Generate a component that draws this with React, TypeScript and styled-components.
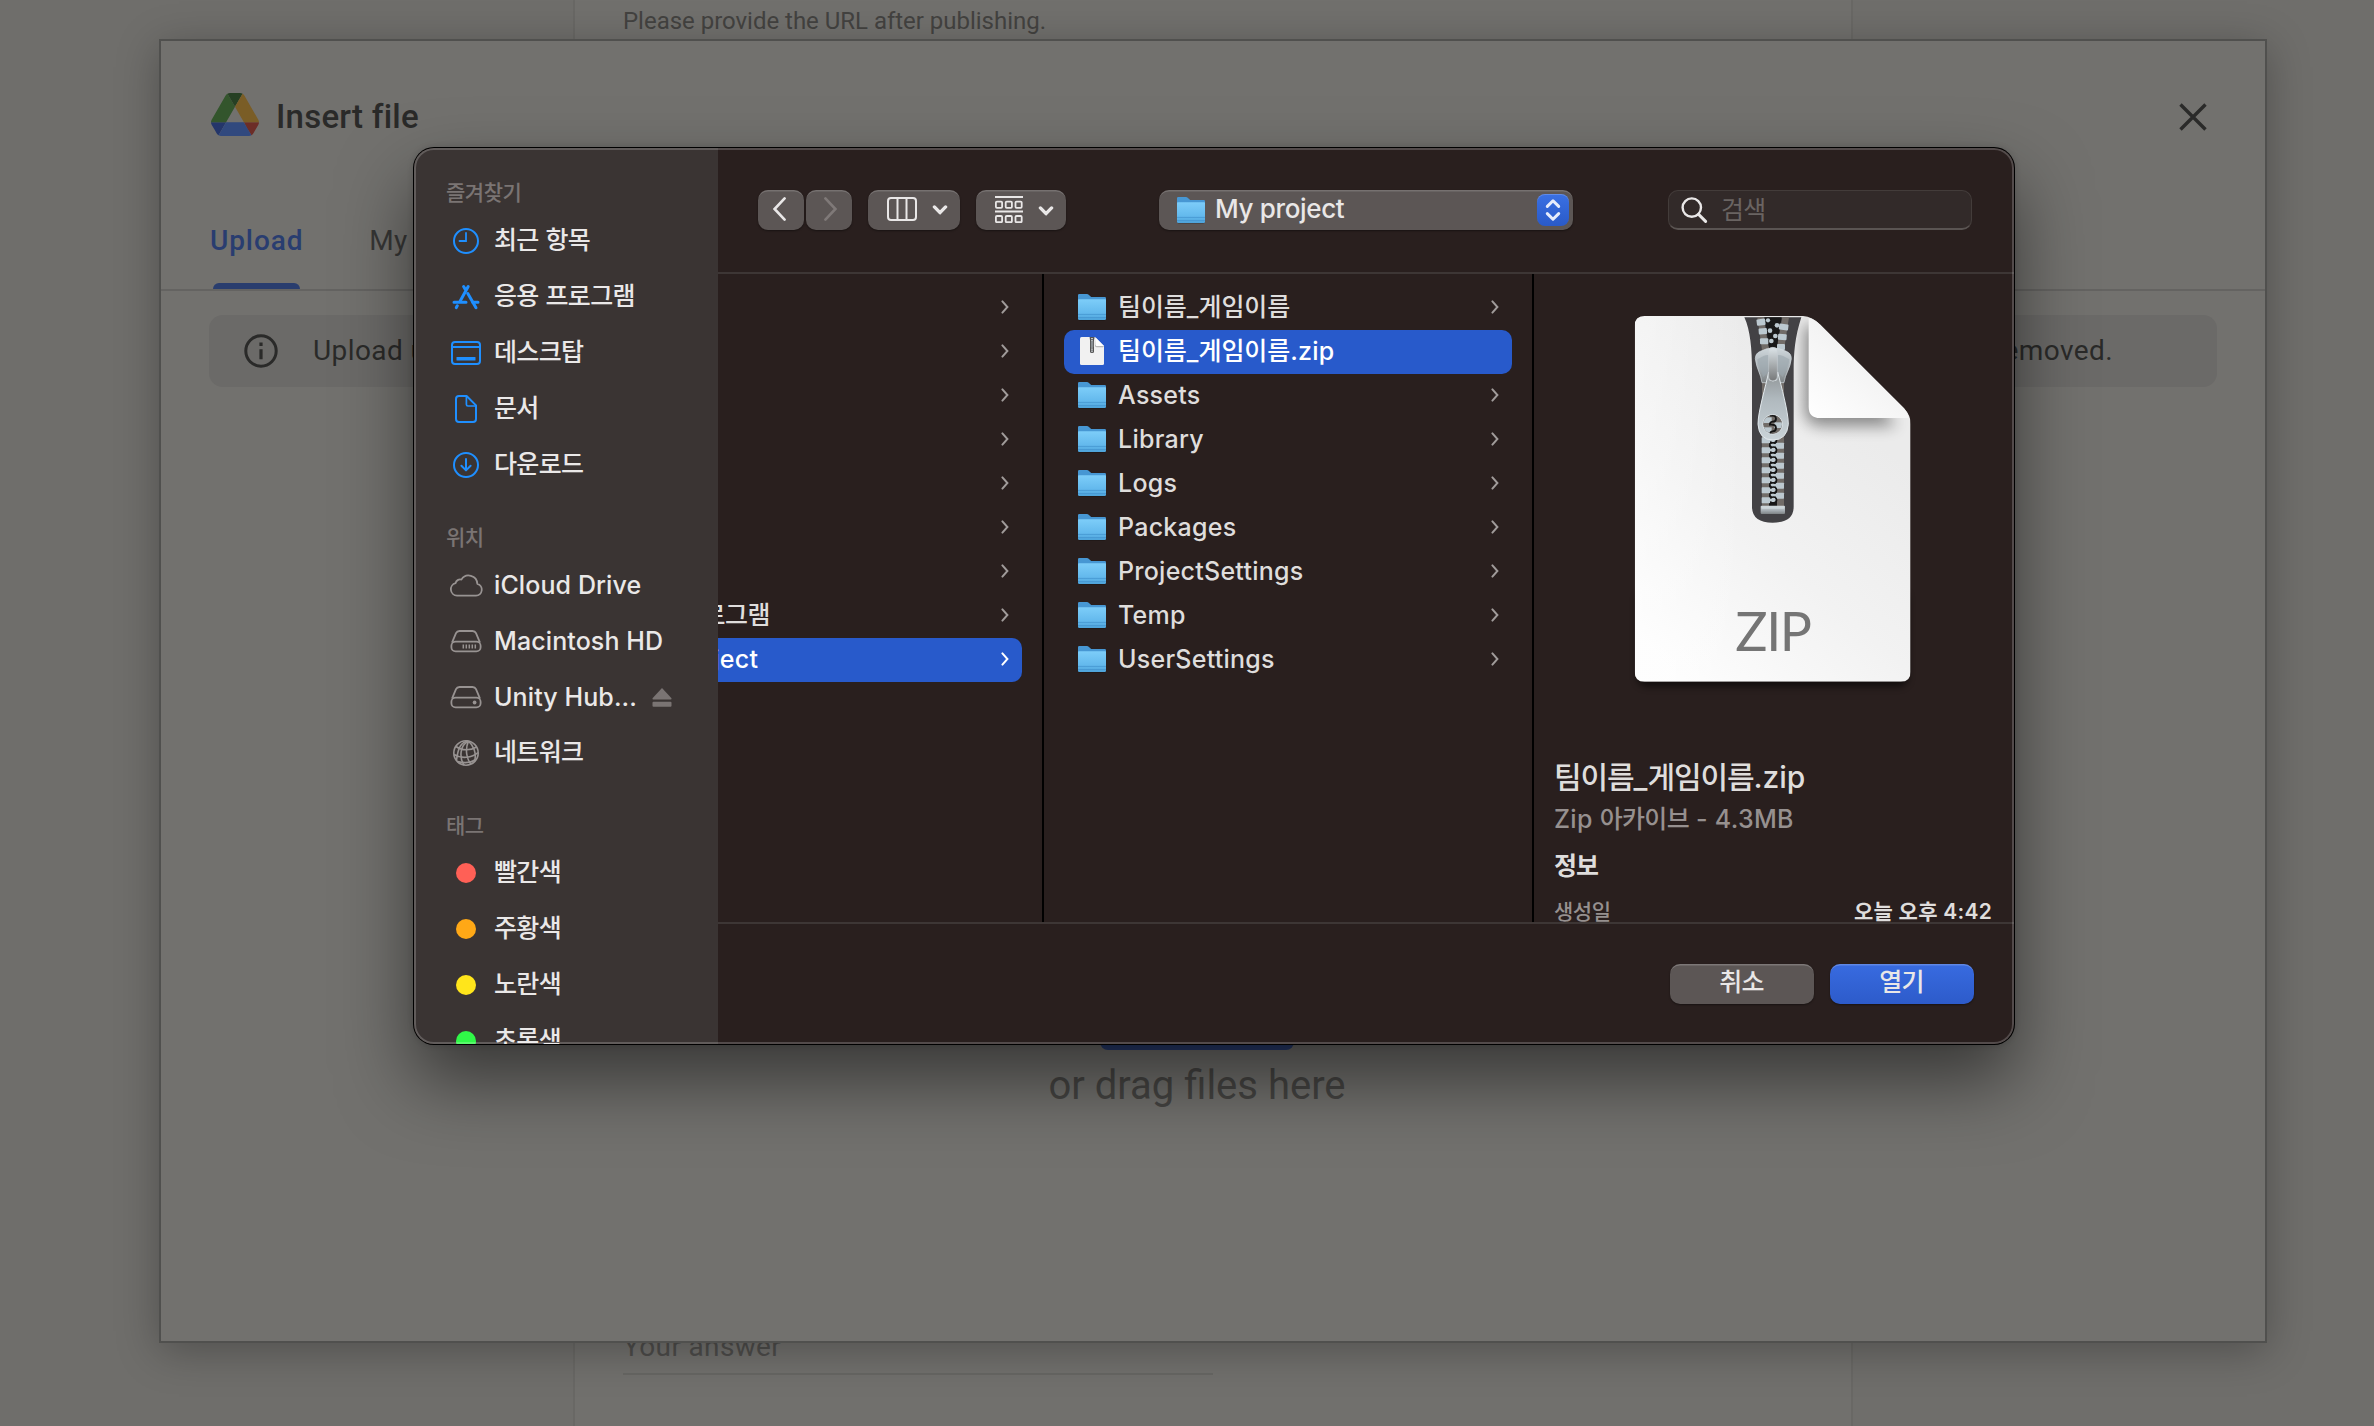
import React from "react";
import styled, { createGlobalStyle } from "styled-components";

const GlobalStyle = createGlobalStyle`
  * { box-sizing: border-box; }
  body { margin: 0; background: #6f6e6b; }
`;

const web = `Roboto, "Noto Sans CJK KR", sans-serif`;
const mac = `Inter, "Noto Sans CJK KR", sans-serif`;

/* ---------- Form page behind the dialogs ---------- */

const Screen = styled.div`
  position: relative;
  width: 2374px;
  height: 1426px;
  overflow: hidden;
  background: #6f6e6b;
  font-family: ${web};
`;

const FormCard = styled.div`
  display: flex;
  flex-direction: column;
  justify-content: space-between;
  width: 1280px;
  height: 1426px;
  margin-left: 573px;
  padding: 0 48px 51px;
  border: solid #696865;
  border-width: 0 2px;
  background: #71706d;
`;

const FormHint = styled.div`
  padding-top: 6px;
  font-size: 24px;
  line-height: 30px;
  letter-spacing: -0.02px;
  color: #434240;
`;

const AnswerField = styled.div`
  width: 590px;
  height: 45px;
  border-bottom: 2px solid #676663;
  font-size: 28px;
  line-height: 34px;
  letter-spacing: 0.35px;
  color: #4d4c4a;
`;

/* ---------- Insert file dialog ---------- */

const PickerDialog = styled.section`
  position: absolute;
  left: 159px;
  top: 39px;
  width: 2108px;
  height: 1304px;
  display: flex;
  flex-direction: column;
  border: 2px solid #50504e;
  background: #72716e;
  box-shadow: 0 8px 40px rgba(0, 0, 0, 0.28);
`;

const PickerHeader = styled.header`
  display: flex;
  align-items: center;
  height: 151px;
  padding: 0 58px 0 50px;
`;

const PickerTitle = styled.h1`
  flex: 1;
  margin: 0 0 0 17px;
  font-size: 33px;
  font-weight: 500;
  line-height: 40px;
  letter-spacing: 0.25px;
  color: #2a2a29;
`;

const Tabs = styled.nav`
  display: flex;
  gap: 66px;
  height: 99px;
  padding-left: 49px;
  border-bottom: 2px solid #646361;
`;

const Tab = styled.div<{ $active?: boolean }>`
  display: flex;
  flex-direction: column;
  align-items: center;
  justify-content: space-between;
  padding-top: 32px;
  font-size: 28px;
  font-weight: ${(p) => (p.$active ? 500 : 400)};
  line-height: 34px;
  letter-spacing: ${(p) => (p.$active ? 0.9 : 0.3)}px;
  white-space: nowrap;
  color: ${(p) => (p.$active ? "#293d70" : "#363635")};
`;

const TabIndicator = styled.span`
  width: 87px;
  height: 6px;
  border-radius: 6px 6px 0 0;
  background: #293d6e;
`;

const Notice = styled.div`
  display: flex;
  align-items: center;
  height: 72px;
  margin: 24px 48px 0;
  padding: 0 104px 0 35px;
  border-radius: 14px;
  background: #6b6a68;
  font-size: 28px;
  letter-spacing: 0.4px;
  color: #2a2a29;
`;

const NoticeStart = styled.span`
  flex: 1;
  margin: -2px 0 0 35px;
`;

const NoticeEnd = styled.span`
  margin-top: -2px;
`;

const DropZone = styled.div`
  display: flex;
  flex-direction: column;
  align-items: center;
  margin-top: 591px;
  padding-right: 32px;
`;

const BrowseButton = styled.div`
  width: 194px;
  height: 72px;
  border-radius: 8px;
  background: #2a3f74;
`;

const DropHint = styled.div`
  margin-top: 12px;
  font-size: 40px;
  line-height: 48px;
  color: #464543;
`;

/* ---------- System open panel ---------- */

const OpenPanel = styled.section`
  position: absolute;
  left: 414px;
  top: 148px;
  width: 1600px;
  height: 896px;
  display: flex;
  overflow: hidden;
  border-radius: 20px;
  background: #291f1e;
  font-family: ${mac};
  color: #dfdddc;
  &::after {
    content: "";
    position: absolute;
    inset: 0;
    border: 2px solid rgba(255, 255, 255, 0.2);
    border-radius: 20px;
  }
`;

const PanelShadow = styled.div`
  position: absolute;
  left: 413px;
  top: 147px;
  width: 1602px;
  height: 898px;
  border-radius: 21px;
  background: #000;
  box-shadow: 0 36px 72px rgba(0, 0, 0, 0.5), 0 0 6px rgba(0, 0, 0, 0.15);
`;

const Sidebar = styled.aside`
  flex: none;
  width: 304px;
  background: #3a3433;
`;

const SideHeading = styled.h2<{ $h: number }>`
  height: ${(p) => p.$h}px;
  margin: 0;
  padding: 31px 0 0 32px;
  font-size: 21px;
  font-weight: 500;
  line-height: 28px;
  letter-spacing: -0.5px;
  color: #7a7473;
`;

const SideItem = styled.div`
  display: flex;
  align-items: center;
  height: 56px;
  padding-left: 34px;
  font-size: 25px;
  font-weight: 500;
  color: #eae8e8;
`;

const SideIcon = styled.span`
  display: flex;
  justify-content: center;
  width: 36px;
  margin-right: 10px;
`;

const SideLabel = styled.span<{ $up?: number }>`
  line-height: 36px;
  letter-spacing: 0.1px;
  white-space: nowrap;
  margin-top: ${(p) => -(p.$up ?? 0)}px;
`;

const TagDot = styled.span<{ $color: string }>`
  width: 20px;
  height: 20px;
  border-radius: 50%;
  background: ${(p) => p.$color};
`;

const Eject = styled.svg`
  margin-left: 15px;
`;

const Main = styled.div`
  flex: 1;
  display: flex;
  flex-direction: column;
  min-width: 0;
`;

const Toolbar = styled.div`
  display: flex;
  align-items: center;
  height: 126px;
  padding: 0 42px 0 40px;
  border-bottom: 2px solid #3d3635;
`;

const ToolButton = styled.div<{ $w: number; $ml?: number; $pad?: string }>`
  display: flex;
  align-items: center;
  justify-content: space-between;
  width: ${(p) => p.$w}px;
  height: 40px;
  margin-left: ${(p) => p.$ml ?? 0}px;
  padding: ${(p) => p.$pad ?? "0"};
  border-radius: 10px;
  background: #5c5655;
  box-shadow: inset 0 2px 0 -0.5px rgba(255, 255, 255, 0.16), 0 1px 2px rgba(0, 0, 0, 0.4);
`;

const LocationName = styled.span`
  flex: 1;
  margin: -2px 0 0 10px;
  font-size: 26px;
  font-weight: 500;
  line-height: 36px;
  letter-spacing: -0.35px;
  color: #e9e7e7;
`;

const Stepper = styled.span`
  display: flex;
  align-items: center;
  justify-content: center;
  width: 32px;
  height: 32px;
  border-radius: 8px;
  background: linear-gradient(#3a70e3, #2a5ac8);
  box-shadow: inset 0 1px 0 rgba(255, 255, 255, 0.2);
`;

const SearchField = styled.div`
  display: flex;
  align-items: center;
  width: 304px;
  height: 40px;
  margin-left: 95px;
  padding-left: 12px;
  border: 1px solid #433c3a;
  border-bottom: 2px solid #5a5452;
  border-radius: 10px;
  background: #322a29;
  font-size: 25px;
  letter-spacing: -0.7px;
  color: #6a6462;
`;

const SearchHint = styled.span`
  margin: -4px 0 0 13px;
`;

const Browser = styled.div`
  display: flex;
  height: 648px;
  overflow: hidden;
`;

const Column = styled.div<{ $w: number }>`
  flex: none;
  width: ${(p) => p.$w}px;
  padding: 12px 20px 0;
  overflow: hidden;
  border-right: 2px solid #000;
`;

const ParentColumn = styled(Column)`
  padding-left: 0;
  display: flex;
  flex-direction: column;
  align-items: flex-end;
`;

const Row = styled.div<{ $selected?: boolean }>`
  display: flex;
  flex: none;
  align-items: center;
  width: 448px;
  height: 44px;
  padding: 0 13px 2px 14px;
  border-radius: 10px;
  background: ${(p) => (p.$selected ? "#285acb" : "transparent")};
  color: ${(p) => (p.$selected ? "#fff" : "#dfdddc")};
`;

const RowName = styled.span`
  flex: 1;
  margin-left: 12px;
  font-size: 25px;
  font-weight: 500;
  line-height: 36px;
  letter-spacing: 0.25px;
  white-space: nowrap;
`;

const Hangul = styled.span<{ $ls: number }>`
  letter-spacing: ${(p) => p.$ls}px;
`;

const Preview = styled.div`
  flex: 1;
  padding: 36px 22px 0 20px;
`;

const ZipArt = styled.svg`
  display: block;
  margin-left: 69px;
`;

const FileName = styled.div`
  margin-top: 58px;
  font-size: 30px;
  font-weight: 500;
  line-height: 44px;
  white-space: nowrap;
`;

const FileKind = styled.div`
  margin-top: 1px;
  font-size: 25px;
  font-weight: 500;
  line-height: 38px;
  letter-spacing: 0.3px;
  color: #96908f;
`;

const InfoTitle = styled.div`
  margin-top: 8px;
  font-size: 25px;
  font-weight: 700;
  line-height: 40px;
  letter-spacing: -1px;
`;

const InfoRow = styled.div`
  display: flex;
  justify-content: space-between;
  margin-top: 10px;
  font-size: 21px;
  font-weight: 500;
  line-height: 32px;
  letter-spacing: -0.5px;
  white-space: nowrap;
`;

const InfoKey = styled.span`
  color: #96908f;
`;

const InfoValue = styled.span`
  font-weight: 600;
  letter-spacing: 0.25px;
`;

const Footer = styled.div`
  display: flex;
  flex: 1;
  align-items: center;
  justify-content: flex-end;
  gap: 16px;
  padding-right: 40px;
  border-top: 2px solid #3d3635;
`;

const PushButton = styled.div<{ $primary?: boolean }>`
  width: 144px;
  height: 40px;
  padding-right: 1px;
  border-radius: 10px;
  background: ${(p) => (p.$primary ? "linear-gradient(#386be0, #2d5bca)" : "#5c5655")};
  box-shadow: inset 0 2px 0 -0.5px rgba(255, 255, 255, 0.2), 0 1px 2px rgba(0, 0, 0, 0.4);
  font-size: 25px;
  font-weight: 500;
  line-height: 37px;
  letter-spacing: -0.7px;
  text-align: center;
  color: #e9e7e7;
`;

/* ---------- Drawings ---------- */

const LogoSvg = styled.svg`
  margin-top: -4px;
`;

const DriveLogo = () => (
  <LogoSvg width="48" height="43" viewBox="0 0 87.3 78">
    <path fill="#24366a" d="m6.6 66.85 3.85 6.65c.8 1.4 1.95 2.5 3.3 3.3l13.75-23.8h-27.5c0 1.55.4 3.1 1.2 4.5z" />
    <path fill="#33552c" d="m43.65 25-13.75-23.8c-1.35.8-2.5 1.9-3.3 3.3l-25.4 44a9.06 9.06 0 0 0-1.2 4.5h27.5z" />
    <path fill="#6c2d27" d="m73.55 76.8c1.35-.8 2.5-1.9 3.3-3.3l1.6-2.75 7.65-13.25c.8-1.4 1.2-2.95 1.2-4.5h-27.5l5.85 11.5z" />
    <path fill="#264023" d="m43.65 25 13.75-23.8c-1.35-.8-2.9-1.2-4.5-1.2h-18.5c-1.6 0-3.15.45-4.5 1.2z" />
    <path fill="#31497e" d="m59.8 53h-32.3l-13.75 23.8c1.35.8 2.9 1.2 4.5 1.2h50.8c1.6 0 3.15-.45 4.5-1.2z" />
    <path fill="#7a5d26" d="m73.4 26.5-12.7-22c-.8-1.4-1.95-2.5-3.3-3.3l-13.75 23.8 16.15 28h27.45c0-1.55-.4-3.1-1.2-4.5z" />
  </LogoSvg>
);

const CloseIcon = () => (
  <svg width="28" height="28" viewBox="0 0 28 28" stroke="#2a2a29" strokeWidth="3.4">
    <path d="M1.5 1.5 26.5 26.5M26.5 1.5 1.5 26.5" />
  </svg>
);

const InfoIcon = () => (
  <svg width="34" height="34" viewBox="0 0 34 34" fill="none" stroke="#2a2a29" strokeWidth="3">
    <circle cx="17" cy="17" r="15.2" />
    <path d="M17 15.2v10M17 8.6v3.4" strokeWidth="3.2" />
  </svg>
);

const blue = "#1f8fff";
const grey = "#989392";

const ClockIcon = () => (
  <svg width="28" height="28" viewBox="0 0 28 28" fill="none" stroke={blue} strokeWidth="2" strokeLinecap="round">
    <circle cx="14" cy="14" r="12" />
    <path d="M14 6v8H7.5" strokeWidth="1.8" />
  </svg>
);

const AppsIcon = () => (
  <svg width="28" height="26" viewBox="0 0 28 26" fill="none" stroke={blue} strokeWidth="3" strokeLinecap="round">
    <path d="M16.2 2.5 8.2 17M11.6 2.5l1.6 2.8M15.8 9.5l8.2 14.2M5.3 21.8l-1 1.8" />
    <path d="M2 18.3h12M20.8 18.3H26" />
  </svg>
);

const DesktopIcon = () => (
  <svg width="30" height="24" viewBox="0 0 30 24" fill="none" stroke={blue} strokeWidth="2">
    <rect x="1" y="1" width="28" height="22" rx="3" />
    <path d="M1 6h28" />
    <rect x="5.5" y="16" width="19" height="3.6" rx="0.6" fill={blue} stroke="none" />
  </svg>
);

const DocumentIcon = () => (
  <svg width="22" height="28" viewBox="0 0 22 28" fill="none" stroke={blue} strokeWidth="2" strokeLinejoin="round">
    <path d="M4 1h7.6L21 10.4V24a3 3 0 0 1-3 3H4a3 3 0 0 1-3-3V4a3 3 0 0 1 3-3z" />
    <path d="M11.4 1.4v8a1.6 1.6 0 0 0 1.6 1.6h7.6" strokeWidth="1.7" />
  </svg>
);

const DownloadIcon = () => (
  <svg width="28" height="28" viewBox="0 0 28 28" fill="none" stroke={blue} strokeWidth="2" strokeLinecap="round" strokeLinejoin="round">
    <circle cx="14" cy="14" r="12" />
    <path d="M14 8v11M9.4 14.8 14 19.4l4.6-4.6" />
  </svg>
);

const CloudIcon = () => (
  <svg width="34" height="24" viewBox="0 0 34 24" fill="none" stroke={grey} strokeWidth="1.8" strokeLinejoin="round">
    <path d="M8 22.6A6.3 6.3 0 0 1 6.6 10.2A4.6 4.6 0 0 1 12.4 6.6A8.6 8.6 0 0 1 28.3 10.8A6 6 0 0 1 27 22.6z" />
  </svg>
);

const DriveIcon = ({ internal }: { internal?: boolean }) => (
  <svg width="32" height="24" viewBox="0 0 32 24" fill="none" stroke={grey} strokeWidth="1.8">
    <path d="M2 13.6 6 4.2Q7 2 9.5 2h13Q25 2 26 4.2l4 9.4" />
    <rect x="1.4" y="12.6" width="29.2" height="9.8" rx="4.2" />
    {internal ? (
      <path d="M13.3 15.4v4.2M16.3 15.4v4.2M19.3 15.4v4.2M22.3 15.4v4.2M25.3 15.4v4.2" strokeWidth="1.5" />
    ) : (
      <circle cx="24.6" cy="17.5" r="1.9" fill={grey} stroke="none" />
    )}
  </svg>
);

const NetworkIcon = () => (
  <svg width="28" height="28" viewBox="0 0 28 28" fill="none" stroke={grey} strokeWidth="1.6">
    <circle cx="14" cy="14" r="12.2" />
    <path d="M16.5 2.2C8 6 7 18 12 26M16.5 2.2C12 12 16 22 19 25M16.5 2.2C21 6 25 14 22.5 22.5" />
    <path d="M16 2C10 3 6 7 4.5 21.5M4 7.5C10 12 19 11.5 24.6 8M2 15.5C9 20 20 19 26 13.5M5.5 22.5C11 24 18 24.5 23.5 20.5" />
  </svg>
);

const Chevron = ({ color, back, w = 13, h = 24, sw = 2.6 }: { color: string; back?: boolean; w?: number; h?: number; sw?: number }) => (
  <svg width={w} height={h} viewBox={`0 0 ${w} ${h}`} fill="none" stroke={color} strokeWidth={sw} strokeLinecap="round" strokeLinejoin="miter">
    <path d={back ? `M${w - 1.4} 1.4L1.6 ${h / 2}L${w - 1.4} ${h - 1.4}` : `M1.4 1.4L${w - 1.6} ${h / 2}L1.4 ${h - 1.4}`} />
  </svg>
);

const DownCaret = () => (
  <svg width="16" height="12" viewBox="0 0 16 12" fill="none" stroke="#e9e7e7" strokeWidth="3.3" strokeLinecap="round" strokeLinejoin="round">
    <path d="M2.4 3.9 8 9.7 13.6 3.9" />
  </svg>
);

const ColumnsIcon = () => (
  <svg width="30" height="24" viewBox="0 0 30 24" fill="none" stroke="#e9e7e7" strokeWidth="2">
    <rect x="1" y="1" width="28" height="22" rx="3" />
    <path d="M10.5 1v22M19.5 1v22" />
  </svg>
);

const GroupIcon = () => (
  <svg width="28" height="27" viewBox="0 0 28 27" fill="none" stroke="#e9e7e7" strokeWidth="1.8">
    <path d="M0 1h28M0 15.5h28" />
    {[5.6, 20].map((y) => [0.9, 10.7, 20.5].map((x) => <rect key={`${x}-${y}`} x={x} y={y} width="6.2" height="6.2" rx="1" />))}
  </svg>
);

const StepperIcon = () => (
  <svg width="16" height="24" viewBox="0 0 16 24" fill="none" stroke="#e6ecfb" strokeWidth="3" strokeLinecap="round" strokeLinejoin="round">
    <path d="M2.3 8.4 8 2.8l5.7 5.6M2.3 15.6 8 21.2l5.7-5.6" />
  </svg>
);

const SearchIcon = () => (
  <svg width="27" height="26" viewBox="0 0 27 26" fill="none" stroke="#e9e7e7" strokeWidth="2.4" strokeLinecap="round">
    <circle cx="10.8" cy="10.6" r="9.2" />
    <path d="m17.6 17.4 7 7" strokeWidth="2.9" />
  </svg>
);

const FolderIcon = () => (
  <svg width="28" height="28" viewBox="0 0 28 28">
    <defs>
      <linearGradient id="folderFront" x1="0" y1="0" x2="0" y2="1">
        <stop offset="0" stopColor="#7dcdf9" />
        <stop offset="0.7" stopColor="#62b8ec" />
        <stop offset="1" stopColor="#4ea3da" />
      </linearGradient>
    </defs>
    <rect x="0.5" y="24" width="27" height="3.4" rx="1.5" fill="#000" opacity="0.35" />
    <path d="M0 2.2Q0 1 1.2 1H9q1 0 1.7.7L12.6 3.5q.6.5 1.4.5h12.8Q28 4 28 5.2V20H0z" fill="#4797d3" />
    <path d="M0 7q0-.8.8-.8h26.4q.8 0 .8.8v18.8q0 1.2-1.2 1.2H1.2Q0 27 0 25.8z" fill="url(#folderFront)" />
    <path d="M0 21.4h28M0 24.6h28" stroke="#4292cd" strokeWidth="0.9" opacity="0.8" />
  </svg>
);

const ZipIcon = () => (
  <svg width="28" height="30" viewBox="0 0 28 30">
    <path d="M2 2.5Q2 1 3.5 1H17l9 9v17.5q0 1.5-1.5 1.5h-21Q2 29 2 27.5z" fill="#f1f1f1" />
    <path d="M17.6 8.5q0 1.5 1.5 1.5H26l-1 1.2h-6.5q-1.6 0-1.6-2V2z" fill="#b9b9b9" />
    <path d="M17.6 1.5v7q0 1.5 1.5 1.5H26z" fill="#fff" />
    <path d="M11.6 1h5l-.6 3v12q0 1-2 1t-2-1V4z" fill="#555" />
    <path d="M14 2v14" stroke="#c3c8ca" strokeWidth="2" strokeDasharray="1.2 0.9" />
    <rect x="12.9" y="4.5" width="2.4" height="7" rx="1.2" fill="#8c9194" />
  </svg>
);

const lowerLeft = [442, 472, 502, 532, 562, 592, 622];
const lowerRight = [458, 488, 518, 548, 578, 608];

const ZipDrawing = () => (
  <ZipArt width="300" height="386.667" viewBox="100 60 900 1160">
    <defs>
      <linearGradient id="sheet" gradientUnits="userSpaceOnUse" x1="200" y1="1100" x2="800" y2="400">
        <stop offset="0" stopColor="#fdfdfd" />
        <stop offset="0.5" stopColor="#f2f2f2" />
        <stop offset="1" stopColor="#ebebeb" />
      </linearGradient>
      <linearGradient id="sheen" x1="0" y1="0" x2="1" y2="0">
        <stop offset="0" stopColor="#fff" stopOpacity="0.4" />
        <stop offset="0.4" stopColor="#fff" stopOpacity="0" />
      </linearGradient>
      <linearGradient id="flap" x1="0" y1="1" x2="0.6" y2="0.3">
        <stop offset="0" stopColor="#ffffff" />
        <stop offset="1" stopColor="#f1f1f1" />
      </linearGradient>
      <linearGradient id="metal" x1="0" y1="0" x2="0" y2="1">
        <stop offset="0" stopColor="#cfd7db" />
        <stop offset="0.55" stopColor="#a9b1b6" />
        <stop offset="1" stopColor="#7e8385" />
      </linearGradient>
      <linearGradient id="bridge" x1="0" y1="0" x2="0" y2="1">
        <stop offset="0" stopColor="#dde5e9" />
        <stop offset="1" stopColor="#77797a" />
      </linearGradient>
      <linearGradient id="pull" x1="0" y1="0" x2="0" y2="1">
        <stop offset="0" stopColor="#8f9496" />
        <stop offset="0.4" stopColor="#b0b9be" />
        <stop offset="1" stopColor="#c9d3d8" />
      </linearGradient>
      <filter id="soft" x="-30%" y="-30%" width="160%" height="160%">
        <feGaussianBlur stdDeviation="22" />
      </filter>
      <filter id="ground" x="-10%" y="-10%" width="120%" height="120%">
        <feGaussianBlur stdDeviation="11" />
      </filter>
      <clipPath id="sheetClip">
        <path d="M165 78H640Q668 80 692 104L943 355Q963 376 963 402V1145Q963 1175 933 1175H165Q135 1175 135 1145V108Q135 78 165 78z" />
      </clipPath>
    </defs>
    <rect x="142" y="900" width="814" height="290" rx="30" fill="#000" opacity="0.55" filter="url(#ground)" />
    <g clipPath="url(#sheetClip)">
      <rect x="135" y="78" width="828" height="1100" fill="url(#sheet)" />
      <rect x="135" y="78" width="828" height="1100" fill="url(#sheen)" />
      <path d="M645 100V365Q650 408 700 408H920L700 120z" fill="#000" opacity="0.42" filter="url(#soft)" />
      <path d="M464 82H635C616 140 612 190 612 240V650Q612 698 549 698Q487 698 487 650V240C487 180 482 120 464 82z" fill="#434245" />
      <path d="M503 82 517 180V650H583V180L598 82H578L562 170H536L522 82z" fill="#716c68" />
      <path d="M524 82H576L562 170V648H538V170z" fill="#191919" />
      <g fill="#bcc9d0">
        <rect x="501" y="87" width="26" height="19" rx="3" transform="rotate(-7 514 96)" />
        <circle cx="535" cy="91" r="6.5" />
        <rect x="507" y="115" width="25" height="18" rx="3" transform="rotate(-4 519 124)" />
        <circle cx="541" cy="122" r="7" />
        <rect x="511" y="145" width="25" height="18" rx="3" />
        <circle cx="545" cy="153" r="7" />
        <rect x="568" y="102" width="28" height="18" rx="3" transform="rotate(7 582 111)" />
        <circle cx="562" cy="106" r="7" />
        <rect x="565" y="132" width="26" height="18" rx="3" transform="rotate(4 578 141)" />
        <circle cx="557" cy="138" r="7" />
        <rect x="562" y="162" width="24" height="18" rx="3" />
        {lowerLeft.map((y) => (
          <React.Fragment key={y}>
            <rect x="516" y={y} width="25" height="18" rx="2" />
            <rect x="536" y={y + 4} width="14" height="8" />
            <rect x="545" y={y + 1} width="13" height="14" rx="5" />
          </React.Fragment>
        ))}
        {lowerRight.map((y) => (
          <React.Fragment key={y}>
            <rect x="559" y={y} width="24" height="18" rx="2" />
            <rect x="550" y={y + 4} width="14" height="8" />
            <rect x="542" y={y + 2} width="13" height="13" rx="5" />
          </React.Fragment>
        ))}
      </g>
      <path
        d={lowerLeft.map((y, i) => `${i ? "L" : "M"}546 ${y}Q560 ${y - 4} 561 ${y + 8}Q560 ${y + 17} 550 ${y + 16}Q539 ${y + 17} 540 ${y + 24}`).join("")}
        fill="none"
        stroke="#151515"
        strokeWidth="4.5"
      />
      <rect x="513" y="647" width="73" height="25" rx="3" fill="url(#metal)" />
      <rect x="515" y="648" width="69" height="8" rx="3" fill="#cdd6da" />
    </g>
    <path d="M497 206Q497 190 512 184Q549 164 590 184Q605 190 605 206C602 236 586 252 583 278H517C514 252 500 236 497 206z" fill="url(#metal)" stroke="#d5dde1" strokeWidth="2" />
    <path d="M503 208Q530 192 537 196V246L520 262C516 240 505 230 503 208zM599 208Q572 192 564 196V246L580 262C586 240 597 230 599 208z" fill="#9ba6ad" opacity="0.6" />
    <path
      d="M537 246C528 290 505 365 505 403Q508 450 550 450Q592 450 596 403C596 365 575 290 564 246L561 270Q550 276 539 270zM549 374a29 29 0 1 1-.1 0z"
      fill="url(#pull)"
      fillRule="evenodd"
      stroke="#e2e9ed"
      strokeWidth="3"
    />
    <path d="M537 176Q549 168 563 176V258Q563 272 549 272Q537 272 537 258z" fill="url(#bridge)" stroke="#c8d0d4" strokeWidth="1.5" />
    <clipPath id="pullHole">
      <circle cx="549" cy="403" r="28" />
    </clipPath>
    <g clipPath="url(#pullHole)">
      <rect x="520" y="374" width="60" height="60" fill="#716c68" />
      <rect x="516" y="382" width="30" height="17" fill="#bcc9d0" />
      <rect x="516" y="412" width="30" height="17" fill="#bcc9d0" />
      <rect x="554" y="397" width="28" height="17" fill="#bcc9d0" />
      <path d="M541 377Q559 374 559 386Q559 395 549 395Q540 396 541 404Q559 402 559 414Q559 424 549 424Q541 425 541 434" fill="none" stroke="#151515" strokeWidth="5.5" />
    </g>
    <path d="M657 84Q675 87 692 104L943 355Q953 366 958 384H691Q657 384 657 350z" fill="url(#flap)" />
    <text x="552" y="1083" textAnchor="middle" fontFamily="Lato, Inter, sans-serif" fontSize="161" textLength="230" fill="#757575">
      ZIP
    </text>
  </ZipArt>
);

/* ---------- Data ---------- */

const favourites = [
  { label: "최근 항목", icon: <ClockIcon /> },
  { label: "응용 프로그램", icon: <AppsIcon /> },
  { label: "데스크탑", icon: <DesktopIcon /> },
  { label: "문서", icon: <DocumentIcon /> },
  { label: "다운로드", icon: <DownloadIcon /> },
];

const locations = [
  { label: "iCloud Drive", icon: <CloudIcon /> },
  { label: "Macintosh HD", icon: <DriveIcon internal /> },
  { label: "Unity Hub...", icon: <DriveIcon />, eject: true },
  { label: "네트워크", icon: <NetworkIcon />, up: 2 },
];

const tags = [
  { label: "빨간색", color: "#ff6056" },
  { label: "주황색", color: "#ffa816" },
  { label: "노란색", color: "#ffe51b" },
  { label: "초록색", color: "#30f848" },
];

const parents = ["", "", "", "", "", "", "", "응용 프로그램", "My project"];

const entries = ["팀이름_게임이름", "팀이름_게임이름.zip", "Assets", "Library", "Logs", "Packages", "ProjectSettings", "Temp", "UserSettings"];

const Mixed = ({ text, ls = -0.65 }: { text: string; ls?: number }) => (
  <>
    {text.split(/([가-힣]+)/).map((part, i) =>
      /[가-힣]/.test(part) ? (
        <Hangul key={i} $ls={ls}>
          {part}
        </Hangul>
      ) : (
        part
      )
    )}
  </>
);

export default function App() {
  return (
    <Screen>
      <GlobalStyle />
      <FormCard>
        <FormHint>Please provide the URL after publishing.</FormHint>
        <AnswerField>Your answer</AnswerField>
      </FormCard>

      <PickerDialog>
        <PickerHeader>
          <DriveLogo />
          <PickerTitle>Insert file</PickerTitle>
          <CloseIcon />
        </PickerHeader>
        <Tabs>
          <Tab $active>
            Upload
            <TabIndicator />
          </Tab>
          <Tab>My</Tab>
        </Tabs>
        <Notice>
          <InfoIcon />
          <NoticeStart>Upload u</NoticeStart>
          <NoticeEnd>removed.</NoticeEnd>
        </Notice>
        <DropZone>
          <BrowseButton />
          <DropHint>or drag files here</DropHint>
        </DropZone>
      </PickerDialog>

      <PanelShadow />
      <OpenPanel>
        <Sidebar>
          <SideHeading $h={65}>즐겨찾기</SideHeading>
          {favourites.map((f) => (
            <SideItem key={f.label}>
              <SideIcon>{f.icon}</SideIcon>
              <SideLabel $up={2}>
                <Mixed text={f.label} />
              </SideLabel>
            </SideItem>
          ))}
          <SideHeading $h={64}>위치</SideHeading>
          {locations.map((l) => (
            <SideItem key={l.label}>
              <SideIcon>{l.icon}</SideIcon>
              <SideLabel $up={l.up ?? 1}>
                <Mixed text={l.label} />
              </SideLabel>
              {l.eject && (
                <Eject width="20" height="19" viewBox="0 0 20 19" fill="#7a7473">
                  <path d="M10 0 19.5 10.2Q19.8 11.5 18.6 11.5H1.4Q.2 11.5.5 10.2z" />
                  <rect x="0.5" y="13.7" width="19" height="5" rx="1" />
                </Eject>
              )}
            </SideItem>
          ))}
          <SideHeading $h={64}>태그</SideHeading>
          {tags.map((t) => (
            <SideItem key={t.label}>
              <SideIcon>
                <TagDot $color={t.color} />
              </SideIcon>
              <SideLabel $up={3}>
                <Mixed text={t.label} />
              </SideLabel>
            </SideItem>
          ))}
        </Sidebar>

        <Main>
          <Toolbar>
            <ToolButton $w={46} $pad="0 18px 3px 15px">
              <Chevron back color="#e9e7e7" />
            </ToolButton>
            <ToolButton $w={46} $ml={2} $pad="0 15px 3px 18px">
              <Chevron color="#7f7978" />
            </ToolButton>
            <ToolButton $w={92} $ml={16} $pad="0 12px 2px 19px">
              <ColumnsIcon />
              <DownCaret />
            </ToolButton>
            <ToolButton $w={90} $ml={16} $pad="0 12px 1px 19px">
              <GroupIcon />
              <DownCaret />
            </ToolButton>
            <ToolButton $w={414} $ml={93} $pad="0 4px 0 18px">
              <FolderIcon />
              <LocationName>My project</LocationName>
              <Stepper>
                <StepperIcon />
              </Stepper>
            </ToolButton>
            <SearchField>
              <SearchIcon />
              <SearchHint>검색</SearchHint>
            </SearchField>
          </Toolbar>

          <Browser>
            <ParentColumn $w={326}>
              {parents.map((name, i) => {
                const selected = i === parents.length - 1;
                return (
                  <Row key={i} $selected={selected}>
                    <FolderIcon />
                    <RowName>
                      <Mixed text={name} ls={-0.5} />
                    </RowName>
                    <Chevron color={selected ? "#fff" : "#a09b9a"} w={8} h={14} sw={2} />
                  </Row>
                );
              })}
            </ParentColumn>
            <Column $w={490}>
              {entries.map((name) => {
                const zip = name.endsWith(".zip");
                return (
                  <Row key={name} $selected={zip}>
                    {zip ? <ZipIcon /> : <FolderIcon />}
                    <RowName>
                      <Mixed text={name} ls={-0.1} />
                    </RowName>
                    {!zip && <Chevron color="#a09b9a" w={8} h={14} sw={2} />}
                  </Row>
                );
              })}
            </Column>
            <Preview>
              <ZipDrawing />
              <FileName>
                <Mixed text="팀이름_게임이름.zip" ls={-1.1} />
              </FileName>
              <FileKind>
                <Mixed text="Zip 아카이브 - 4.3MB" />
              </FileKind>
              <InfoTitle>정보</InfoTitle>
              <InfoRow>
                <InfoKey>생성일</InfoKey>
                <InfoValue>오늘 오후 4:42</InfoValue>
              </InfoRow>
            </Preview>
          </Browser>

          <Footer>
            <PushButton>취소</PushButton>
            <PushButton $primary>열기</PushButton>
          </Footer>
        </Main>
      </OpenPanel>
    </Screen>
  );
}
